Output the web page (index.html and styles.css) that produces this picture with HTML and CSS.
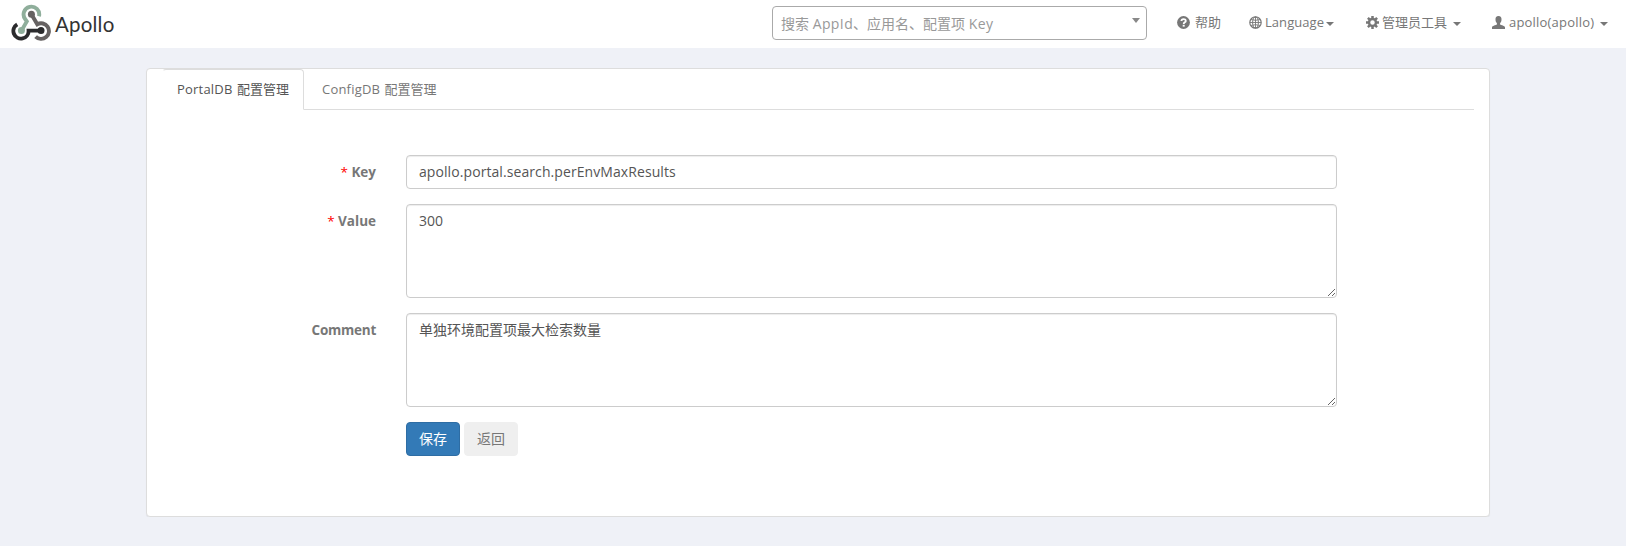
FILE: index.html
```
<!DOCTYPE html>
<html lang="zh-CN">
<head>
<meta charset="utf-8">
<title>Apollo</title>
<link rel="stylesheet" href="styles.css">
</head>
<body>
<header class="navbar">
  <a class="brand">
    <svg class="logo" width="40" height="38" viewBox="11 4 40 38" fill="none" stroke-width="3.9">
      <path d="M39 16.2A7.8 7.8 0 1 0 25.4 19.4L26.8 21.4L21.5 30.6" stroke="#8fae9b"/>
      <circle cx="21.4" cy="30.6" r="3.5" fill="#8fae9b"/>
      <path d="M31.4 14.2L37.3 24.3A7.8 7.8 0 1 1 35.6 36.6" stroke="#666262"/>
      <circle cx="31.4" cy="14.2" r="3.5" fill="#666262"/>
      <path d="M17.2 24.4A7.6 7.6 0 1 0 28.6 30.6H41" stroke="#2b2b2d"/>
      <circle cx="41" cy="30.6" r="3.5" fill="#2b2b2d"/>
    </svg>
    <span class="brand-name">Apollo</span>
  </a>
  <div class="search"><span>搜索 <span class="latin">AppId</span>、应用名、配置项 <span class="latin">Key</span></span><i class="search-arrow"></i></div>
  <nav class="menu">
    <a class="item help">
      <svg class="icon" viewBox="0 0 13 13"><circle cx="6.5" cy="6.5" r="6.4" fill="#777"/><path d="M4.4 5.1C4.4 2.4 8.8 2.5 8.8 4.9C8.8 6.4 6.7 6.3 6.7 8" fill="none" stroke="#fff" stroke-width="1.8"/><path d="M5.7 8.8h2v1.8h-2z" fill="#fff"/></svg>
      <span>帮助</span>
    </a>
    <a class="item language">
      <svg class="icon" viewBox="0 0 13 13" fill="none" stroke="#777"><circle cx="6.5" cy="6.5" r="5.7" stroke-width="1.2"/><ellipse cx="6.5" cy="6.5" rx="2.9" ry="5.6"/><path d="M6.5 1v11M1 6.5h11M2 3.6q4.5 1.4 9 0M2 9.4q4.5-1.4 9 0" stroke-width=".9"/></svg>
      <span class="latin">Language</span><i class="caret"></i>
    </a>
    <a class="item tools">
      <svg class="icon" viewBox="0 0 13 13" fill="none" stroke="#777"><circle cx="6.5" cy="6.5" r="3.5" stroke-width="2.5"/><path d="M6.5 0v2.5M6.5 10.5V13M0 6.5h2.5M10.5 6.5H13M1.9 1.9l1.8 1.8M9.3 9.3l1.8 1.8M11.1 1.9L9.3 3.7M3.7 9.3l-1.8 1.8" stroke-width="2.5"/></svg>
      <span>管理员工具</span><i class="caret"></i>
    </a>
    <a class="item user">
      <svg class="icon" viewBox="0 0 13 13"><path d="M6.5 0C8.7 0 9.6 1.4 9.5 3.4C9.5 5.2 8.9 6.2 8.1 6.9V8.4C9 9.2 12.9 9.6 13 11.2V13H0V11.2C.1 9.6 4 9.2 4.9 8.4V6.9C4.1 6.2 3.5 5.2 3.5 3.4C3.4 1.4 4.3 0 6.5 0Z" fill="#777"/></svg>
      <span class="latin">apollo(apollo)</span><i class="caret"></i>
    </a>
  </nav>
</header>
<main class="panel">
  <ul class="tabs">
    <li class="tab active"><span class="latin">PortalDB</span> 配置管理</li>
    <li class="tab"><span class="latin">ConfigDB</span> 配置管理</li>
  </ul>
  <form class="form">
    <div class="row">
      <label class="label" for="key"><b class="star">*</b> <span>Key</span></label>
      <input class="control key-input" id="key" type="text" value="apollo.portal.search.perEnvMaxResults">
    </div>
    <div class="row">
      <label class="label" for="value"><b class="star">*</b> <span>Value</span></label>
      <textarea class="control area" id="value">300</textarea>
    </div>
    <div class="row">
      <label class="label" for="comment"><span class="label-comment">Comment</span></label>
      <textarea class="control area" id="comment">单独环境配置项最大检索数量</textarea>
    </div>
    <div class="actions">
      <button class="btn primary" type="button">保存</button>
      <button class="btn" type="button">返回</button>
    </div>
  </form>
</main>
</body>
</html>
```
FILE: styles.css
```
* { box-sizing: border-box; }
body {
  margin: 0;
  background: #eff1f7;
  color: #777;
  font: 13px/20px "Open Sans", "Noto Sans CJK SC", sans-serif;
  overflow: hidden;
}
.navbar {
  display: flex;
  height: 48px;
  background: #fff;
}
.brand { display: flex; width: 772px; padding: 4px 0 0 11px; }
.logo { flex: none; }
.brand-name {
  margin: 6px 0 0 4px;
  color: #333;
  font: 20.5px/28px Lato, sans-serif;
  letter-spacing: .2px;
}
.search {
  display: flex;
  justify-content: space-between;
  width: 375px;
  height: 34px;
  margin-top: 6px;
  padding: 7px 6px 0 8px;
  border: 1px solid #aaa;
  border-radius: 4px;
  color: #999;
  font-size: 14px;
  white-space: nowrap;
}
.search .latin { letter-spacing: .4px; }
.search-arrow {
  margin-top: 4px;
  height: 5px;
  border: 4px solid transparent;
  border-top: 5px solid #888;
  border-bottom: 0;
}
.menu { display: flex; margin-left: 30px; padding-top: 13px; }
.item { display: flex; white-space: nowrap; }
.item > span { margin-top: -1px; }
.icon { flex: none; width: 13px; height: 13px; margin: 3px 4px 0 0; }
.help { width: 72px; }
.help .icon { margin-right: 5px; }
.language { width: 117px; }
.tools { width: 126px; }
.language .icon, .tools .icon { margin-right: 3px; }
.language .latin { letter-spacing: .05px; }
.user .latin { letter-spacing: .2px; }
.caret {
  height: 4px;
  margin: 9px 0 0 2px;
  border: 4px solid transparent;
  border-top-color: #777;
  border-bottom: 0;
}
.tools .caret, .user .caret { margin-left: 6px; }
.panel {
  width: 1344px;
  height: 449px;
  margin: 20px 0 0 146px;
  padding: 0 15px;
  background: #fff;
  border: 1px solid #ddd;
  border-radius: 4px;
  box-shadow: 0 1px 1px rgba(0, 0, 0, .05);
}
.tabs {
  display: flex;
  height: 41px;
  margin: 0;
  padding: 0;
  border-bottom: 1px solid #ddd;
  list-style: none;
}
.tab {
  height: 41px;
  padding: 9px 15px;
  border: 1px solid transparent;
  margin-right: 2px;
  white-space: nowrap;
}
.tab .latin { margin-right: 1px; letter-spacing: .2px; }
.active {
  width: 142px;
  padding-left: 14px;
  color: #555;
  background: #fff;
  border-color: #ddd #ddd #fff #fff;
  border-radius: 4px 4px 0 0;
}
.form { margin: 45px 0 0; }
.row { display: flex; margin-bottom: 15px; }
.label {
  width: 214px;
  margin-right: 30px;
  padding-top: 7px;
  text-align: right;
  font-size: 13.5px;
  font-weight: 700;
}
.label-comment { letter-spacing: -.25px; }
.star { color: red; font-weight: 400; }
.control {
  width: 931px;
  height: 34px;
  margin: 0;
  padding: 6px 12px;
  background: #fff;
  border: 1px solid #ccc;
  border-radius: 4px;
  box-shadow: inset 0 1px 1px rgba(0, 0, 0, .075);
  color: #555;
  font: 14px/20px "Open Sans", "Noto Sans CJK SC", sans-serif;
}
.key-input { padding: 5px 12px 7px; letter-spacing: .08px; }
.area { height: 94px; resize: vertical; }
.actions { display: flex; gap: 4px; margin-left: 244px; }
.btn {
  width: 54px;
  height: 34px;
  padding: 0;
  background: #efefef;
  border: 1px solid #efefef;
  border-radius: 4px;
  color: #777;
  font: 14px/20px "Open Sans", "Noto Sans CJK SC", sans-serif;
}
.primary { color: #fff; background: #337ab7; border-color: #2e6da4; }
```
